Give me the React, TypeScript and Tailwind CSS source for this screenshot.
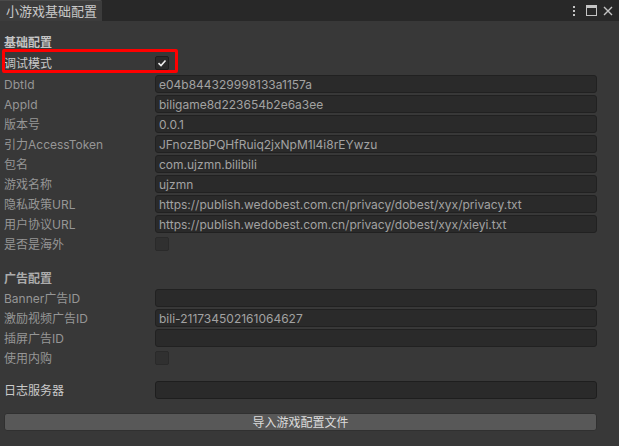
import React from "react";

const font = { fontFamily: 'Inter, "Noto Sans CJK SC", sans-serif' };

function Field({ label, value }: { label: string; value?: string }) {
  return (
    <div className="flex items-center h-[18px]">
      <div className="w-[151px] shrink-0 text-[12px] text-[#969696] leading-none whitespace-nowrap pt-[1px]">{label}</div>
      <div className="flex-1 h-[18px] rounded-[3px] bg-[#2a2a2a] border border-[#212121] flex items-center pl-[3px] pt-[1px] text-[12px] text-[#a2a2a2] leading-none whitespace-nowrap overflow-hidden">
        {value}
      </div>
    </div>
  );
}

function Check({ label, checked, bright }: { label: string; checked?: boolean; bright?: boolean }) {
  return (
    <div className="flex items-center h-[18px]">
      <div className={`w-[151px] shrink-0 text-[12px] leading-none whitespace-nowrap pt-[1px] ${bright ? "text-[#cacaca]" : "text-[#969696]"}`}>{label}</div>
      <div className={`w-[14px] h-[14px] rounded-[2px] border flex items-center justify-center ${checked ? "bg-[#2a2a2a] border-[#1e1e1e]" : "bg-[#303030] border-[#2a2a2a]"}`}>
        {checked && (
          <svg width="10" height="10" viewBox="0 0 10 10">
            <path d="M1.5 5.2 L4 7.5 L8.5 2.5" stroke="#eeeeee" strokeWidth="1.6" fill="none" />
          </svg>
        )}
      </div>
    </div>
  );
}

export default function App() {
  return (
    <div className="w-[619px] h-[446px] bg-[#383838] flex flex-col overflow-hidden" style={font}>
      <div className="h-[21px] bg-[#282828] flex items-end shrink-0">
        <div className="h-[21px] w-[102px] bg-[#3c3c3c] border-t border-[#4a4a4a] flex items-center pl-[6px] text-[13px] text-[#c8c8c8] leading-none whitespace-nowrap rounded-tr-[2px]">
          小游戏基础配置
        </div>
        <div className="flex-1" />
        <div className="flex items-center gap-[6px] h-[21px] pr-[6px]">
          <svg width="4" height="12" viewBox="0 0 4 12">
            <rect x="1" y="1" width="2" height="2" fill="#c4c4c4" />
            <rect x="1" y="5" width="2" height="2" fill="#c4c4c4" />
            <rect x="1" y="9" width="2" height="2" fill="#c4c4c4" />
          </svg>
          <svg width="11" height="11" viewBox="0 0 11 11" className="ml-[4px]">
            <rect x="0.5" y="0.5" width="10" height="10" fill="none" stroke="#c4c4c4" />
            <rect x="0" y="0" width="11" height="3" fill="#c4c4c4" />
          </svg>
          <svg width="10" height="10" viewBox="0 0 10 10">
            <path d="M1 1 L9 9 M9 1 L1 9" stroke="#c4c4c4" strokeWidth="1.4" />
          </svg>
        </div>
      </div>

      <div className="flex flex-col pl-[4px] pr-[22px] pt-[12px] gap-[2px] relative">
        <div className="h-[18px] flex items-center text-[12px] font-bold text-[#c4c4c4] leading-none pt-[1px]">基础配置</div>
        <div className="h-[20px] flex items-center">
          <div className="flex-1">
            <Check label="调试模式" checked bright />
          </div>
        </div>
        <Field label="DbtId" value="e04b844329998133a1157a" />
        <Field label="AppId" value="biligame8d223654b2e6a3ee" />
        <Field label="版本号" value="0.0.1" />
        <Field label="引力AccessToken" value="JFnozBbPQHfRuiq2jxNpM1l4i8rEYwzu" />
        <Field label="包名" value="com.ujzmn.bilibili" />
        <Field label="游戏名称" value="ujzmn" />
        <Field label="隐私政策URL" value="https://publish.wedobest.com.cn/privacy/dobest/xyx/privacy.txt" />
        <Field label="用户协议URL" value="https://publish.wedobest.com.cn/privacy/dobest/xyx/xieyi.txt" />
        <Check label="是否是海外" />

        <div className="h-[18px] mt-[14px] flex items-center text-[12px] font-bold text-[#acacac] leading-none pt-[1px]">广告配置</div>
        <Field label="Banner广告ID" value="" />
        <Field label="激励视频广告ID" value="bili-211734502161064627" />
        <Field label="插屏广告ID" value="" />
        <Check label="使用内购" />

        <div className="flex items-center h-[18px] mt-[12px]">
          <div className="w-[151px] shrink-0 text-[12px] text-[#cacaca] leading-none pt-[1px]">日志服务器</div>
          <div className="flex-1 h-[18px] rounded-[3px] bg-[#2a2a2a] border border-[#1e1e1e]" />
        </div>

        <div className="mt-[12px] h-[18px] rounded-[3px] bg-[#585858] border border-[#303030] flex items-center justify-center text-[12px] text-[#dcdcdc] leading-none pt-[1px]">
          导入游戏配置文件
        </div>

        <div className="absolute left-[2px] top-[28px] w-[176px] h-[24px] border-[3px] border-[#ff0000] rounded-[2px] pointer-events-none" />
      </div>
    </div>
  );
}
